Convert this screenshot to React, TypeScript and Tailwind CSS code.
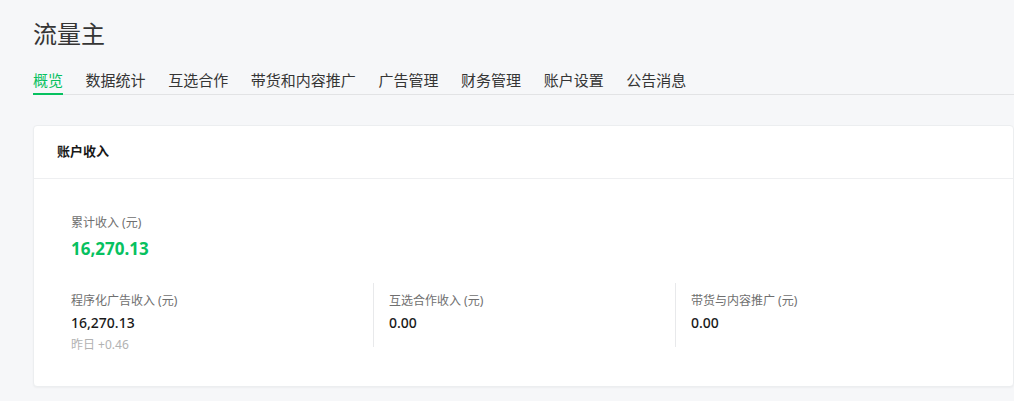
import React from "react";

const tabs = ["概览", "数据统计", "互选合作", "带货和内容推广", "广告管理", "财务管理", "账户设置", "公告消息"];

const font = { fontFamily: '"Noto Sans", "Noto Sans CJK SC", sans-serif' };

type Stat = { label: string; value: string; sub?: string };

const stats: Stat[] = [
  { label: "程序化广告收入 (元)", value: "16,270.13", sub: "昨日 +0.46" },
  { label: "互选合作收入 (元)", value: "0.00" },
  { label: "带货与内容推广 (元)", value: "0.00" },
];

export default function App() {
  return (
    <div className="w-[1014px] h-[401px] overflow-hidden bg-[#f6f7f9] text-[#353535]" style={font}>
      <div className="pl-[33px] pt-[16px]">
        <h1 className="text-[24px] leading-[36px] font-normal text-[#353535]">流量主</h1>
        <nav className="mt-[17px] flex gap-[22.6px] border-b border-[#e2e3e5]">
          {tabs.map((t, i) => (
            <div
              key={t}
              className={
                "text-[15px] leading-[22px] pb-[2px] -mb-px border-b-2 " +
                (i === 0 ? "text-[#07c160] border-[#07c160]" : "text-[#353535] border-transparent")
              }
            >
              {t}
            </div>
          ))}
        </nav>
        <section className="mt-[30px] bg-white rounded-[4px] border border-[#eceef0] shadow-[0_1px_2px_rgba(0,0,0,0.04)] h-[262px]">
          <div className="h-[53px] flex items-center px-[23px] border-b border-[#eeeff1]">
            <h2 className="text-[13px] font-bold text-[#191919]">账户收入</h2>
          </div>
          <div className="pl-[37px] pt-[35px]">
            <div className="text-[12px] leading-[18px] text-[#6f6f6f]">累计收入 (元)</div>
            <div className="mt-[5px] text-[17px] leading-[24px] font-bold text-[#07c160]">16,270.13</div>
            <div className="mt-[31px] flex">
              {stats.map((s, i) => (
                <div
                  key={s.label}
                  className={
                    "w-[302px] h-[64px] -mt-[9px] pt-[9px] " + (i > 0 ? "border-l border-[#e8e9eb] pl-[15px]" : "")
                  }
                >
                  <div className="text-[12px] leading-[18px] text-[#6f6f6f]">{s.label}</div>
                  <div className="mt-[3px] text-[14px] leading-[20px] font-medium text-[#191919]">{s.value}</div>
                  {s.sub && <div className="mt-[3px] text-[12px] leading-[18px] text-[#b2b2b2]">{s.sub}</div>}
                </div>
              ))}
            </div>
          </div>
        </section>
      </div>
    </div>
  );
}
